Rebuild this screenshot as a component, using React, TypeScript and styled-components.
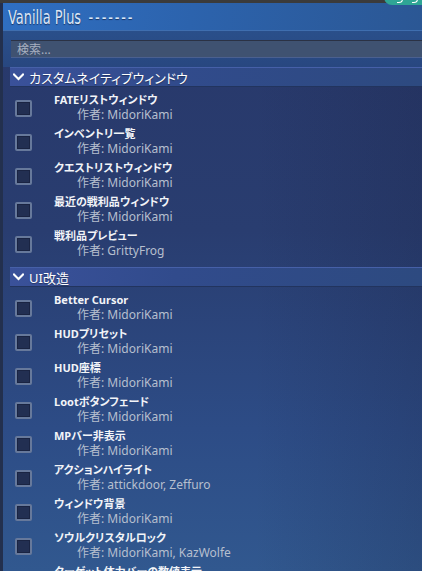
import React from 'react';
import styled, { createGlobalStyle } from 'styled-components';

/* ───────────────────────────
   Global
   ─────────────────────────── */
const GlobalStyle = createGlobalStyle`
  html, body {
    margin: 0;
    padding: 0;
    background: #3a3a3a;
  }
  body {
    font-family: 'Noto Sans', 'Noto Sans CJK JP', sans-serif;
  }
`;

const JP = `'Noto Sans', 'Noto Sans CJK JP', sans-serif`;

/* ───────────────────────────
   Frame
   ─────────────────────────── */
const Screen = styled.div`
  position: relative;
  width: 422px;
  height: 571px;
  overflow: hidden;
  background: #3b3b3b;
  padding-top: 3px;
  box-sizing: border-box;
`;

const Badge = styled.div`
  position: absolute;
  top: -12px;
  right: -8px;
  width: 46px;
  height: 17px;
  border-radius: 8px;
  background: #2fa595;
  display: flex;
  align-items: flex-end;
  justify-content: center;
  gap: 9px;
  padding-bottom: 2px;
  box-sizing: border-box;
`;

const BadgeMark = styled.span`
  width: 5px;
  height: 4px;
  border-bottom: 1.5px solid #ffffff;
  border-right: 1.5px solid #ffffff;
  border-radius: 0 0 4px 0;
`;

const Window = styled.div`
  height: 100%;
  border-left: 3px solid #23304e;
  background:
    linear-gradient(to right, rgba(20, 24, 50, 0) 60%, rgba(20, 24, 50, 0.18) 100%),
    linear-gradient(to bottom, #28386a 0%, #293d70 40%, #2d4c86 75%, #31588f 100%);
  display: flex;
  flex-direction: column;
  overflow: hidden;
`;

/* ───────────────────────────
   Title bar
   ─────────────────────────── */
const TitleBar = styled.div`
  flex-shrink: 0;
  height: 27px;
  padding-left: 5px;
  display: flex;
  align-items: center;
  background: linear-gradient(100deg, #2f6fc2 0%, #2c63ad 45%, #2b5794 100%);
  border-bottom: 1px solid #3f6eaf;
`;

const TitleText = styled.span`
  display: inline-block;
  font-family: 'DejaVu Sans Condensed', 'DejaVu Sans', sans-serif;
  font-size: 20px;
  color: #dce7f6;
  transform: scaleX(0.72);
  transform-origin: left center;
  white-space: nowrap;
  text-shadow: 0 1px 1px rgba(10, 20, 50, 0.6);
  margin-top: 1px;
`;

const Dashes = styled.span`
  letter-spacing: 2.6px;
  margin-left: 2px;
`;

const SearchBand = styled.div`
  flex-shrink: 0;
  background: linear-gradient(to bottom, #2a4f8a 0%, #284780 100%);
  padding: 9px 0 9px 8px;
`;

const SearchBox = styled.div`
  height: 18px;
  background: #3f5271;
  border-top: 1px solid #2b3244;
  border-bottom: 1px solid #4a6090;
  display: flex;
  align-items: center;
  padding-left: 6px;
  box-sizing: border-box;
  font-family: ${JP};
  font-size: 12px;
  color: #a8b0c0;
`;

/* ───────────────────────────
   List
   ─────────────────────────── */
const List = styled.div`
  display: flex;
  flex-direction: column;
`;

const SectionHeader = styled.div<{ $first?: boolean }>`
  flex-shrink: 0;
  margin: ${(p) => (p.$first ? '0' : '10px')} 0 0 7px;
  height: 20px;
  display: flex;
  align-items: center;
  gap: 5px;
  padding-left: 3px;
  background: linear-gradient(to right, #3a519a 0%, #314b8c 40%, #2d4a80 100%);
  border-top: 1px solid #4660a8;
  border-bottom: 1px solid #22345e;
  box-sizing: border-box;
  font-family: ${JP};
  font-size: 13px;
  font-feature-settings: 'palt';
  color: #ffffff;
  text-shadow: 0 1px 1px rgba(0, 0, 0, 0.35);
`;

const Chevron = () => (
  <svg width="11" height="8" viewBox="0 0 11 8">
    <path d="M1 1.5 L5.5 6 L10 1.5" fill="none" stroke="#ffffff" strokeWidth="2" strokeLinecap="square" />
  </svg>
);

const Row = styled.div`
  height: 34px;
  display: flex;
  align-items: flex-start;
  padding-left: 12px;
  flex-shrink: 0;
`;

const Check = styled.div`
  width: 17px;
  height: 17px;
  margin-top: 13px;
  box-sizing: border-box;
  border: 2px solid #67799b;
  border-radius: 2px;
  background: #222f52;
  box-shadow: inset 0 0 0 1px #1a2442;
`;

const RowText = styled.div`
  margin-left: 22px;
  padding-top: 6px;
  display: flex;
  flex-direction: column;
`;

const RowTitle = styled.div`
  font-family: ${JP};
  font-size: 11px;
  font-weight: 700;
  line-height: 14px;
  font-feature-settings: 'palt';
  color: #f2f4f8;
  white-space: nowrap;
`;

const RowAuthor = styled.div`
  font-family: ${JP};
  font-size: 12px;
  line-height: 15px;
  padding-left: 23px;
  color: #b6bfce;
  white-space: nowrap;
`;

/* ───────────────────────────
   Data
   ─────────────────────────── */
type Mod = { name: string; author: string };

const sections: { title: string; mods: Mod[] }[] = [
  {
    title: 'カスタムネイティブウィンドウ',
    mods: [
      { name: 'FATEリストウィンドウ', author: 'MidoriKami' },
      { name: 'インベントリ一覧', author: 'MidoriKami' },
      { name: 'クエストリストウィンドウ', author: 'MidoriKami' },
      { name: '最近の戦利品ウィンドウ', author: 'MidoriKami' },
      { name: '戦利品プレビュー', author: 'GrittyFrog' },
    ],
  },
  {
    title: 'UI改造',
    mods: [
      { name: 'Better Cursor', author: 'MidoriKami' },
      { name: 'HUDプリセット', author: 'MidoriKami' },
      { name: 'HUD座標', author: 'MidoriKami' },
      { name: 'Lootボタンフェード', author: 'MidoriKami' },
      { name: 'MPバー非表示', author: 'MidoriKami' },
      { name: 'アクションハイライト', author: 'attickdoor, Zeffuro' },
      { name: 'ウィンドウ背景', author: 'MidoriKami' },
      { name: 'ソウルクリスタルロック', author: 'MidoriKami, KazWolfe' },
      { name: 'ターゲット体力バーの数値表示', author: 'MidoriKami' },
    ],
  },
];

/* ───────────────────────────
   Component
   ─────────────────────────── */
const App: React.FC = () => {
  return (
    <>
      <GlobalStyle />
      <Screen>
        <Badge>
          <BadgeMark />
          <BadgeMark />
        </Badge>
        <Window>
          <TitleBar>
            <TitleText>
              Vanilla Plus<Dashes> -------</Dashes>
            </TitleText>
          </TitleBar>
          <SearchBand>
            <SearchBox>検索...</SearchBox>
          </SearchBand>
          <List>
            {sections.map((s, i) => (
              <React.Fragment key={s.title}>
                <SectionHeader $first={i === 0}>
                  <Chevron />
                  {s.title}
                </SectionHeader>
                {s.mods.map((m) => (
                  <Row key={m.name}>
                    <Check />
                    <RowText>
                      <RowTitle>{m.name}</RowTitle>
                      <RowAuthor>作者: {m.author}</RowAuthor>
                    </RowText>
                  </Row>
                ))}
              </React.Fragment>
            ))}
          </List>
        </Window>
      </Screen>
    </>
  );
};

export default App;
